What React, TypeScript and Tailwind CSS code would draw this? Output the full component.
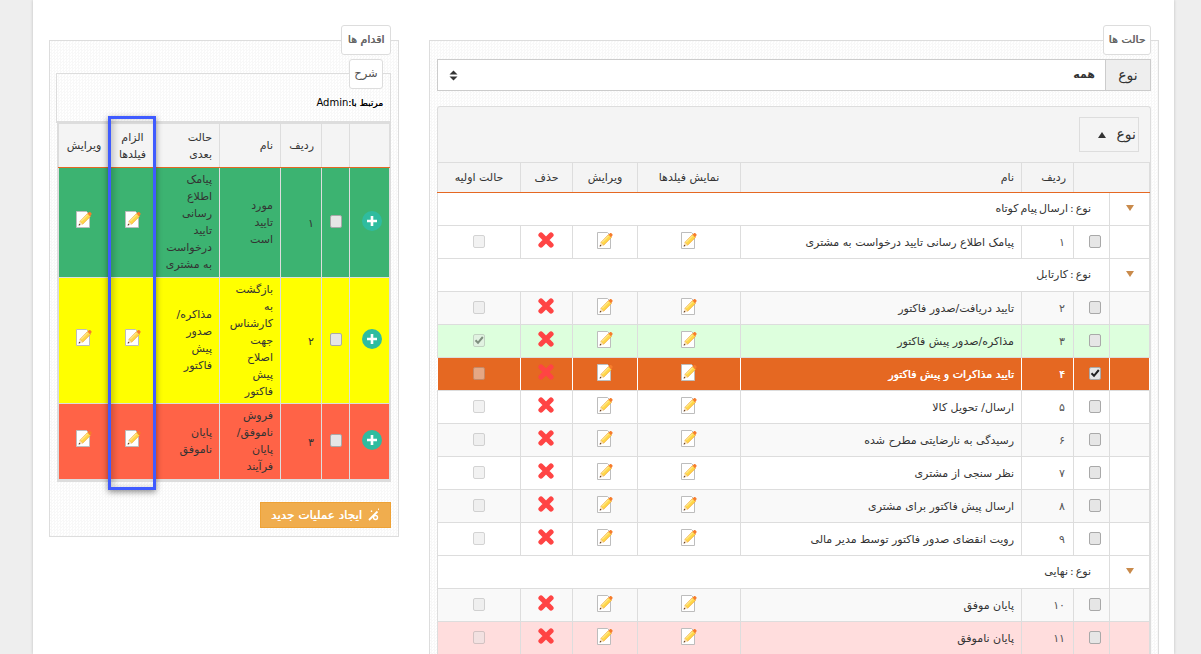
import React from "react";

const Pencil = () => (
  <svg width="16" height="17" viewBox="0 0 16 17" className="inline-block align-middle">
    <path d="M0.5 0.5H10.5L13.5 3.5V16.5H0.5Z" fill="#fff" stroke="#bdbdbd" />
    <path d="M3.8 10.6L11.6 2.6L14.4 5.4L6.6 13.2Z" fill="#ffd84a" stroke="#f2a030" strokeWidth="0.7" />
    <path d="M5 10.4L11.6 3.8" stroke="#fff2b0" strokeWidth="1" />
    <path d="M11.6 2.6L13 1.2C13.4 0.8 13.9 0.8 14.4 1.2L15.4 2.2C15.8 2.7 15.8 3.2 15.4 3.6L14.2 5.2Z" fill="#f67c2c" />
    <path d="M3.8 10.6L2.6 14.4L6.6 13.2Z" fill="#f8dcae" />
    <path d="M3.1 12.7L2.6 14.4L4.5 13.9Z" fill="#4a2410" />
  </svg>
);

const Cross = () => (
  <svg width="16" height="16" viewBox="0 0 16 16" className="inline-block align-middle">
    <path d="M3 3L13 13M13 3L3 13" stroke="#ff4444" strokeWidth="5.2" strokeLinecap="round" />
  </svg>
);

const Plus = () => (
  <svg width="20" height="20" viewBox="0 0 20 20" className="inline-block align-middle">
    <circle cx="10" cy="10" r="10" fill="#2fbc9f" />
    <path d="M10 5V15M5 10H15" stroke="#fff" strokeWidth="2.6" />
  </svg>
);

const Check = ({ on, dim }: { on?: boolean; dim?: boolean }) => (
  <span
    className={`inline-flex h-[13px] w-[12px] items-center justify-center rounded-[2px] border border-[#a9a9a9] bg-[#e6e6e6] align-middle ${dim ? "opacity-50" : ""}`}
  >
    {on && (
      <svg width="10" height="10" viewBox="0 0 10 10">
        <path d="M1.5 5.2L4 7.8L8.8 2" fill="none" stroke="#222" strokeWidth="2" />
      </svg>
    )}
  </span>
);

const GroupArrow = () => (
  <svg width="10" height="8" viewBox="0 0 10 8" className="inline-block">
    <path d="M1 1H9L5 7Z" fill="#c98a4b" />
  </svg>
);

type Row = { n: string; name: string; bg: string; on?: boolean; init?: boolean; active?: boolean };

const rowsA: Row[] = [{ n: "۱", name: "پیامک اطلاع رسانی تایید درخواست به مشتری", bg: "bg-white" }];
const rowsB: Row[] = [
  { n: "۲", name: "تایید دریافت/صدور فاکتور", bg: "bg-[#f9f9f9]" },
  { n: "۳", name: "مذاکره/صدور پیش فاکتور", bg: "bg-[#ddffdd]", init: true },
  { n: "۴", name: "تایید مذاکرات و پیش فاکتور", bg: "bg-[#e56822]", on: true, active: true },
  { n: "۵", name: "ارسال/ تحویل کالا", bg: "bg-white" },
  { n: "۶", name: "رسیدگی به نارضایتی مطرح شده", bg: "bg-[#f9f9f9]" },
  { n: "۷", name: "نظر سنجی از مشتری", bg: "bg-white" },
  { n: "۸", name: "ارسال پیش فاکتور برای مشتری", bg: "bg-[#f9f9f9]" },
  { n: "۹", name: "رویت انقضای صدور فاکتور توسط مدیر مالی", bg: "bg-white" },
];
const rowsC: Row[] = [
  { n: "۱۰", name: "پایان موفق", bg: "bg-[#f9f9f9]" },
  { n: "۱۱", name: "پایان ناموفق", bg: "bg-[#ffdddd]" },
];

const td = "border border-[#dddddd] p-0 text-center";

const StateRow = ({ r }: { r: Row }) => {
  const b = r.active ? "border-x-white border-y-[#dddddd]" : "";
  return (
    <tr className={`h-[33px] ${r.bg} ${r.active ? "text-white [text-shadow:0.4px_0_0_#fff]" : ""}`}>
      <td className={`${td} ${b}`} />
      <td className={`${td} ${b} pb-[2px] pl-[6px]`}>
        <Check on={r.on} />
      </td>
      <td className={`${td} ${b} pr-[8px] pt-[2px] text-right ${r.active ? "" : "text-[#555]"}`}>{r.n}</td>
      <td className={`${td} ${b} pr-[7px] pt-[2px] text-right`}>{r.name}</td>
      <td className={`${td} ${b} pb-[4px]`}>
        <Pencil />
      </td>
      <td className={`${td} ${b} pb-[4px]`}>
        <Pencil />
      </td>
      <td className={`${td} ${b} pb-[4px] pr-[2px]`}>
        <Cross />
      </td>
      <td className={`${td} ${b} pb-[2px]`}>
        <Check dim on={r.init} />
      </td>
    </tr>
  );
};

const GroupRow = ({ label }: { label: string }) => (
  <tr className="h-[33px] bg-white">
    <td className={`${td} pb-[2px]`}>
      <GroupArrow />
    </td>
    <td className={`${td} pr-[18px] text-right [word-spacing:-1.5px]`} colSpan={7}>
      {label}
    </td>
  </tr>
);

const pattern =
  "bg-white bg-[repeating-conic-gradient(#f8f8f8_0_25%,#ffffff_0_50%)] bg-[length:3px_3px]";

const Legend = ({ children, className }: { children: React.ReactNode; className: string }) => (
  <div
    className={`flex h-[30px] items-center justify-center rounded-[3px] border border-[#dddddd] bg-white text-[#555] ${className}`}
  >
    {children}
  </div>
);

const actions = [
  {
    bg: "bg-[#3cb371]",
    n: "۱",
    name: ["مورد", "تایید", "است"],
    next: ["پیامک", "اطلاع", "رسانی", "تایید", "درخواست", "به مشتری"],
  },
  {
    bg: "bg-[#ffff00]",
    n: "۲",
    name: ["بازگشت", "به", "کارشناس", "جهت", "اصلاح", "پیش", "فاکتور"],
    next: ["مذاکره/", "صدور", "پیش", "فاکتور"],
  },
  {
    bg: "bg-[#ff6347]",
    n: "۳",
    name: ["فروش", "ناموفق/", "پایان", "فرآیند"],
    next: ["پایان", "ناموفق"],
  },
];

const Lines = ({ items }: { items: string[] }) => (
  <>
    {items.map((t) => (
      <div key={t}>{t}</div>
    ))}
  </>
);

const ltd = "border border-[#dddddd] px-[7px] py-[3.25px] text-center";
const lth = `${ltd} border-b-[#e56822] !py-[4.5px] font-normal`;

export default function App() {
  return (
    <div
      dir="ltr"
      className="flex h-[654px] w-[1201px] overflow-hidden bg-[#eeeeee] font-['DejaVu_Sans',sans-serif] text-[11px] text-[#333]"
    >
      <div className="w-[33px] shrink-0" />
      <main className="flex h-[654px] w-[1141px] shrink-0 items-start gap-[30px] overflow-hidden bg-white pl-[16px] pt-[40px] shadow-[0_0_3px_rgba(0,0,0,0.2)]">
        {/* actions */}
        <section dir="rtl" className={`w-[350px] shrink-0 border border-[#dddddd] pb-[8px] ${pattern}`}>
          <Legend className="mr-[7px] -mt-[16px] w-[50px]">
            <span className="text-[#666] [text-shadow:0.4px_0_0_#666]">اقدام ها</span>
          </Legend>

          <div className={`ml-[6px] mr-[7px] mt-[18px] h-[50px] border border-b-2 border-[#dddddd] ${pattern}`}>
            <Legend className="mr-[7px] -mt-[15px] w-[34px] text-[11.5px]">شرح</Legend>
            <div className="mt-[7px] pr-[7px] text-[9px] leading-[14px] text-black [text-shadow:0.3px_0_0_#000]">
              مرتبط با:<span className="text-[10px] [text-shadow:none]">Admin</span>
            </div>
          </div>

          <div className="relative mx-[7px] border-x border-b-2 border-[#dddddd] bg-white pl-[1px]">
            <table className="w-[331px] table-fixed border-collapse leading-[17px]">
              <colgroup>
                <col className="w-[40px]" />
                <col className="w-[28px]" />
                <col className="w-[41px]" />
                <col className="w-[61px]" />
                <col className="w-[64px]" />
                <col className="w-[46px]" />
                <col className="w-[51px]" />
              </colgroup>
              <thead>
                <tr className="bg-[#f4f4f4] text-[#333]">
                  <th className={lth} />
                  <th className={lth} />
                  <th className={`${lth} text-right`}>ردیف</th>
                  <th className={`${lth} text-right`}>نام</th>
                  <th className={`${lth} text-right`}>
                    <Lines items={["حالت", "بعدی"]} />
                  </th>
                  <th className={`${lth} !px-0`}>
                    <Lines items={["الزام", "فیلدها"]} />
                  </th>
                  <th className={`${lth} !px-0`}>ویرایش</th>
                </tr>
              </thead>
              <tbody>
                {actions.map((a) => (
                  <tr key={a.n} className={a.bg}>
                    <td className={`${ltd} !pb-[6px] !pl-[13px] !pr-[7px]`}>
                      <Plus />
                    </td>
                    <td className={`${ltd} !px-0 !pb-[6px]`}>
                      <Check />
                    </td>
                    <td className={`${ltd} !pt-[5px] !text-right`}>{a.n}</td>
                    <td className={`${ltd} !text-right`}>
                      <Lines items={a.name} />
                    </td>
                    <td className={`${ltd} !text-right`}>
                      <Lines items={a.next} />
                    </td>
                    <td className={`${ltd} !px-0 !pb-[10px]`}>
                      <Pencil />
                    </td>
                    <td className={`${ltd} !px-0 !pb-[10px]`}>
                      <Pencil />
                    </td>
                  </tr>
                ))}
              </tbody>
            </table>
            <div className="pointer-events-none absolute left-[50px] top-[-7px] h-[374px] w-[48px] border-[3px] border-[#3f5bff] shadow-[0_2px_6px_rgba(0,0,0,0.45),inset_3px_0_6px_rgba(0,0,0,0.2)]" />
          </div>

          <div className="mt-[20px] flex justify-start pr-[7px]">
            <button className="flex h-[26px] w-[131px] items-center justify-center gap-[5px] border border-[#eea236] bg-[#f0ad4e] text-[12px] text-white [text-shadow:0.4px_0_0_#fff]">
              <svg width="13" height="13" viewBox="0 0 13 13" fill="none" stroke="#fff" strokeWidth="1.4">
                <path d="M10.5 3.5L2 12" strokeWidth="1.8" />
                <circle cx="8.5" cy="9.5" r="2" />
                <path d="M4.5 2.5V4M3.7 3.2H5.3M11.5 0.5V2" strokeWidth="0.9" />
              </svg>
              ایجاد عملیات جدید
            </button>
          </div>
        </section>

        {/* states */}
        <section dir="rtl" className={`w-[730px] shrink-0 border border-[#dddddd] px-[7px] ${pattern}`}>
          <Legend className="-mt-[16px] w-[48px]">
            <span className="text-[#666] [text-shadow:0.4px_0_0_#666]">حالت ها</span>
          </Legend>

          <div className="mt-[4px] flex h-[32px] border border-[#cccccc] bg-white">
            <div className="flex w-[45px] items-center justify-center border-l border-[#cccccc] bg-[#eeeeee] text-[14px]">
              نوع
            </div>
            <div className="flex flex-1 items-center justify-between pl-[11px] pr-[10px]">
              <span className="font-bold">همه</span>
              <svg width="9" height="11" viewBox="0 0 9 11">
                <path d="M4.5 0.5L8.5 4.5H0.5ZM4.5 10.5L0.5 6.5H8.5Z" fill="#333" />
              </svg>
            </div>
          </div>

          <div className="mt-[15px] rounded-t-[3px] border-x border-t border-[#dddddd] bg-[#f4f4f4]">
            <div className="flex h-[55px] items-start pr-[11px] pt-[10px]">
              <div className="flex h-[35px] w-[60px] items-center justify-between border border-[#dddddd] px-[2px] pl-[28px] text-[14px]">
                <span>نوع</span>
                <svg width="10" height="8" viewBox="0 0 10 8" className="-ml-[11px] shrink-0">
                  <path d="M5 1L9 7H1Z" fill="#333" />
                </svg>
              </div>
            </div>
            <table className="w-[712px] table-fixed border-collapse leading-[14px]">
              <colgroup>
                <col className="w-[40px]" />
                <col className="w-[36px]" />
                <col className="w-[52px]" />
                <col className="w-[281px]" />
                <col className="w-[103px]" />
                <col className="w-[65px]" />
                <col className="w-[52px]" />
                <col className="w-[83px]" />
              </colgroup>
              <thead>
                <tr className="h-[30px] bg-[#f4f4f4]">
                  <th className={`${td} border-b-[#e56822] font-normal`} colSpan={2} />
                  <th className={`${td} border-b-[#e56822] pr-[7px] text-right font-normal`}>ردیف</th>
                  <th className={`${td} border-b-[#e56822] pr-[7px] text-right font-normal`}>نام</th>
                  <th className={`${td} border-b-[#e56822] font-normal`}>نمایش فیلدها</th>
                  <th className={`${td} border-b-[#e56822] font-normal`}>ویرایش</th>
                  <th className={`${td} border-b-[#e56822] font-normal`}>حذف</th>
                  <th className={`${td} border-b-[#e56822] font-normal`}>حالت اولیه</th>
                </tr>
              </thead>
              <tbody>
                <GroupRow label="نوع : ارسال پیام کوتاه" />
                {rowsA.map((r) => (
                  <StateRow key={r.n} r={r} />
                ))}
                <GroupRow label="نوع : کارتابل" />
                {rowsB.map((r) => (
                  <StateRow key={r.n} r={r} />
                ))}
                <GroupRow label="نوع : نهایی" />
                {rowsC.map((r) => (
                  <StateRow key={r.n} r={r} />
                ))}
              </tbody>
            </table>
          </div>
        </section>
      </main>
    </div>
  );
}
